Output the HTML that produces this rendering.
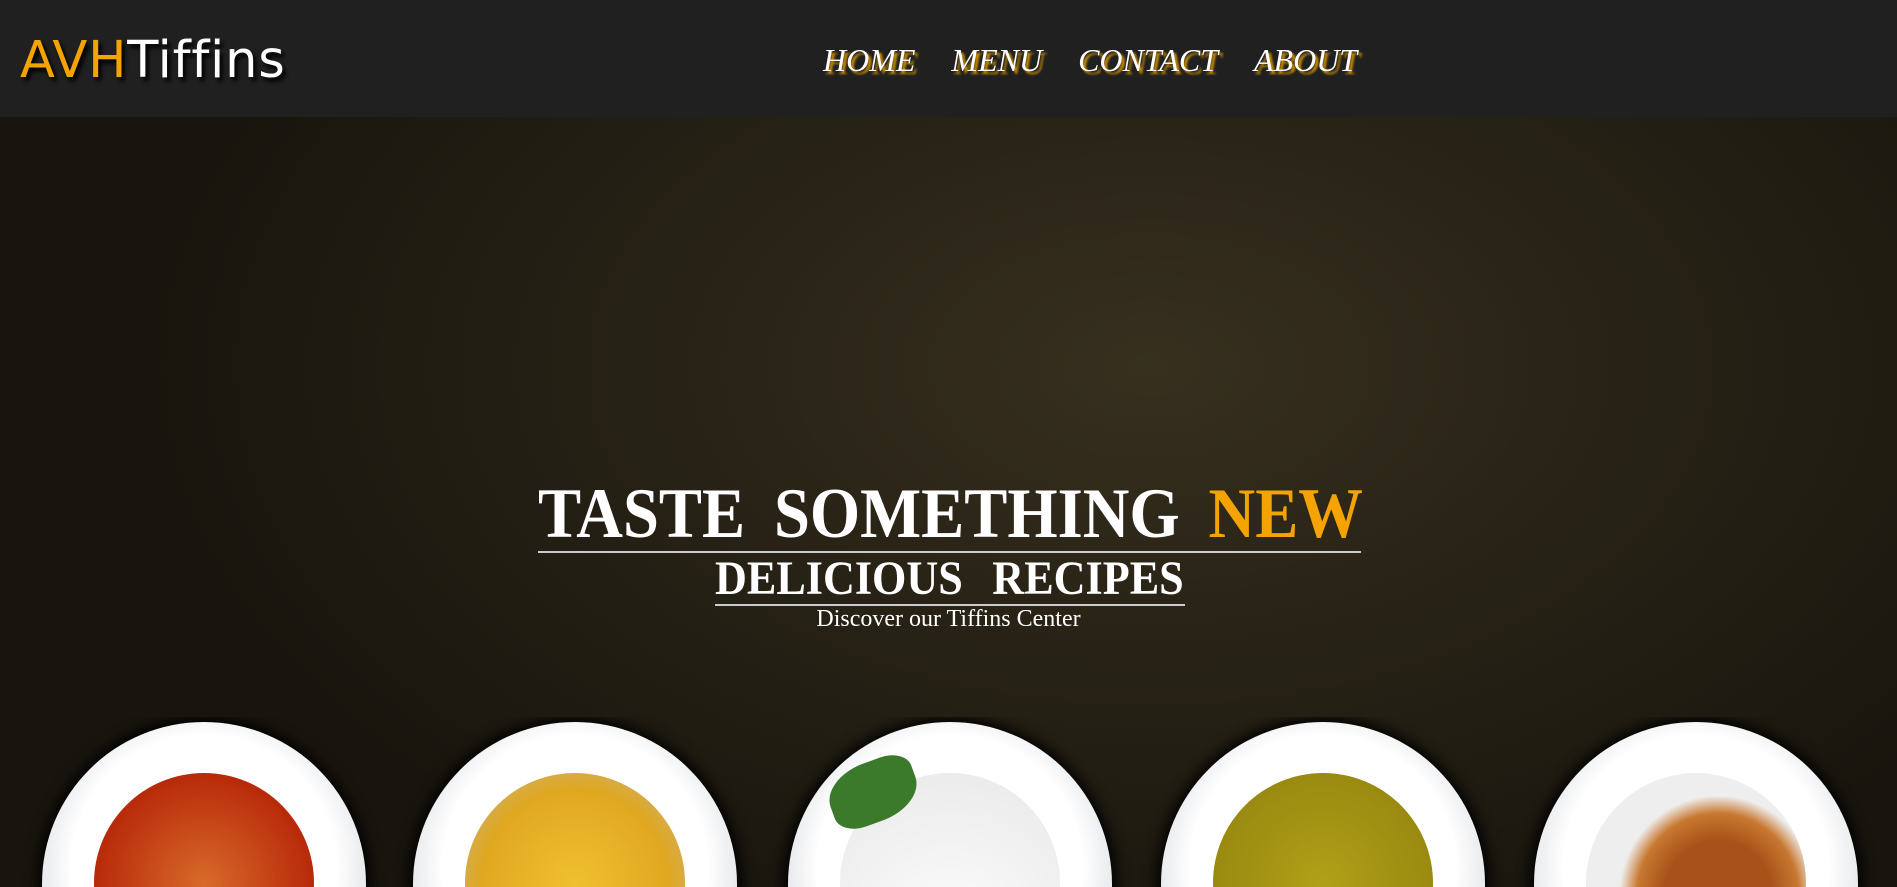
<!DOCTYPE html>
<html><head><meta charset="utf-8"><style>
*{margin:0;padding:0;box-sizing:border-box}
html,body{width:1897px;height:887px;overflow:hidden}
body{background:#1c1810;font-family:"Liberation Serif",serif;position:relative}
.hdr{position:absolute;left:0;top:0;width:1897px;height:117px;background:#202020;z-index:2}
.logo{position:absolute;left:20px;top:31px;font-family:"DejaVu Sans","Liberation Sans",sans-serif;font-size:51px;color:#fff;text-shadow:3px 4px 4px #000;letter-spacing:0.8px}
.logo span{color:#f5a300}
.nav{position:absolute;top:42px;left:823px;font-style:italic;font-size:32px;color:#fff;text-shadow:3px 3px 2px #d09000;white-space:nowrap}
.nav a{margin-right:36px}
.wrap{position:absolute;left:0;top:117px;width:1897px;height:770px;overflow:hidden;background:radial-gradient(ellipse 1000px 600px at 1150px 250px,#37301f 0%,#2a2417 40%,#201c12 75%,#19150e 100%)}
.t1{position:absolute;left:538px;top:478px;width:823px;font-weight:bold;font-size:71px;color:#fff;white-space:nowrap;border-bottom:2px solid #ccc;line-height:72px;height:75px}
.t1 div{transform:scaleX(0.91);transform-origin:left;word-spacing:14px}
.t1 span{color:#f5a300}
.t2{position:absolute;left:715px;top:556px;width:470px;font-weight:bold;font-size:48px;color:#fff;white-space:nowrap;border-bottom:2px solid #ccc;line-height:46px;height:50px}
.t2 div{transform:scaleX(0.92);transform-origin:left;word-spacing:20px}
.t3{position:absolute;left:0;width:1897px;top:606px;text-align:center;color:#fff;font-size:24px}
.clip{position:absolute;left:0;top:600px;width:1897px;height:170px;overflow:hidden}
.plate{position:absolute;top:5px;width:324px;height:324px;border-radius:50%;background:radial-gradient(circle at 50% 45%,#fff 55%,#e4e6ea 70%,#fafafa 85%);box-shadow:0 0 14px 4px #000}
.food{position:absolute;left:52px;top:51px;width:220px;height:220px;border-radius:50%}
</style></head><body>
<div class="hdr"><div class="logo"><span>AVH</span>Tiffins</div>
<div class="nav"><a>HOME</a><a>MENU</a><a>CONTACT</a><a>ABOUT</a></div></div>
<div class="wrap">
<div class="clip">
<div class="plate" style="left:42px"><div class="food" style="background:radial-gradient(circle,#d86a2a,#b82a0a 70%,#a01a05)"></div></div>
<div class="plate" style="left:413px"><div class="food" style="background:radial-gradient(circle,#f0c030,#e0a820 60%,#c9b080 90%)"></div></div>
<div class="plate" style="left:788px"><div class="food" style="background:radial-gradient(circle at 50% 75%,#f59a10 12%,#fafafa 14%,#f0f0f0 60%,#e8e8e8)"></div>
<div style="position:absolute;left:40px;top:40px;width:90px;height:60px;background:#3b7a2a;border-radius:50% 30% 50% 30%;transform:rotate(-20deg)"></div></div>
<div class="plate" style="left:1161px"><div class="food" style="background:radial-gradient(circle,#b0a018,#9a8a10 70%,#857a0c)"></div></div>
<div class="plate" style="left:1534px"><div class="food" style="background:radial-gradient(circle at 60% 55%,#a8521a 30%,#c87830 45%,#eeeeee 55%)"></div></div>
</div>
</div>
<div class="t1"><div>TASTE SOMETHING <span>NEW</span></div></div>
<div class="t2"><div>DELICIOUS RECIPES</div></div>
<div class="t3">Discover our Tiffins Center</div>
</body></html>
